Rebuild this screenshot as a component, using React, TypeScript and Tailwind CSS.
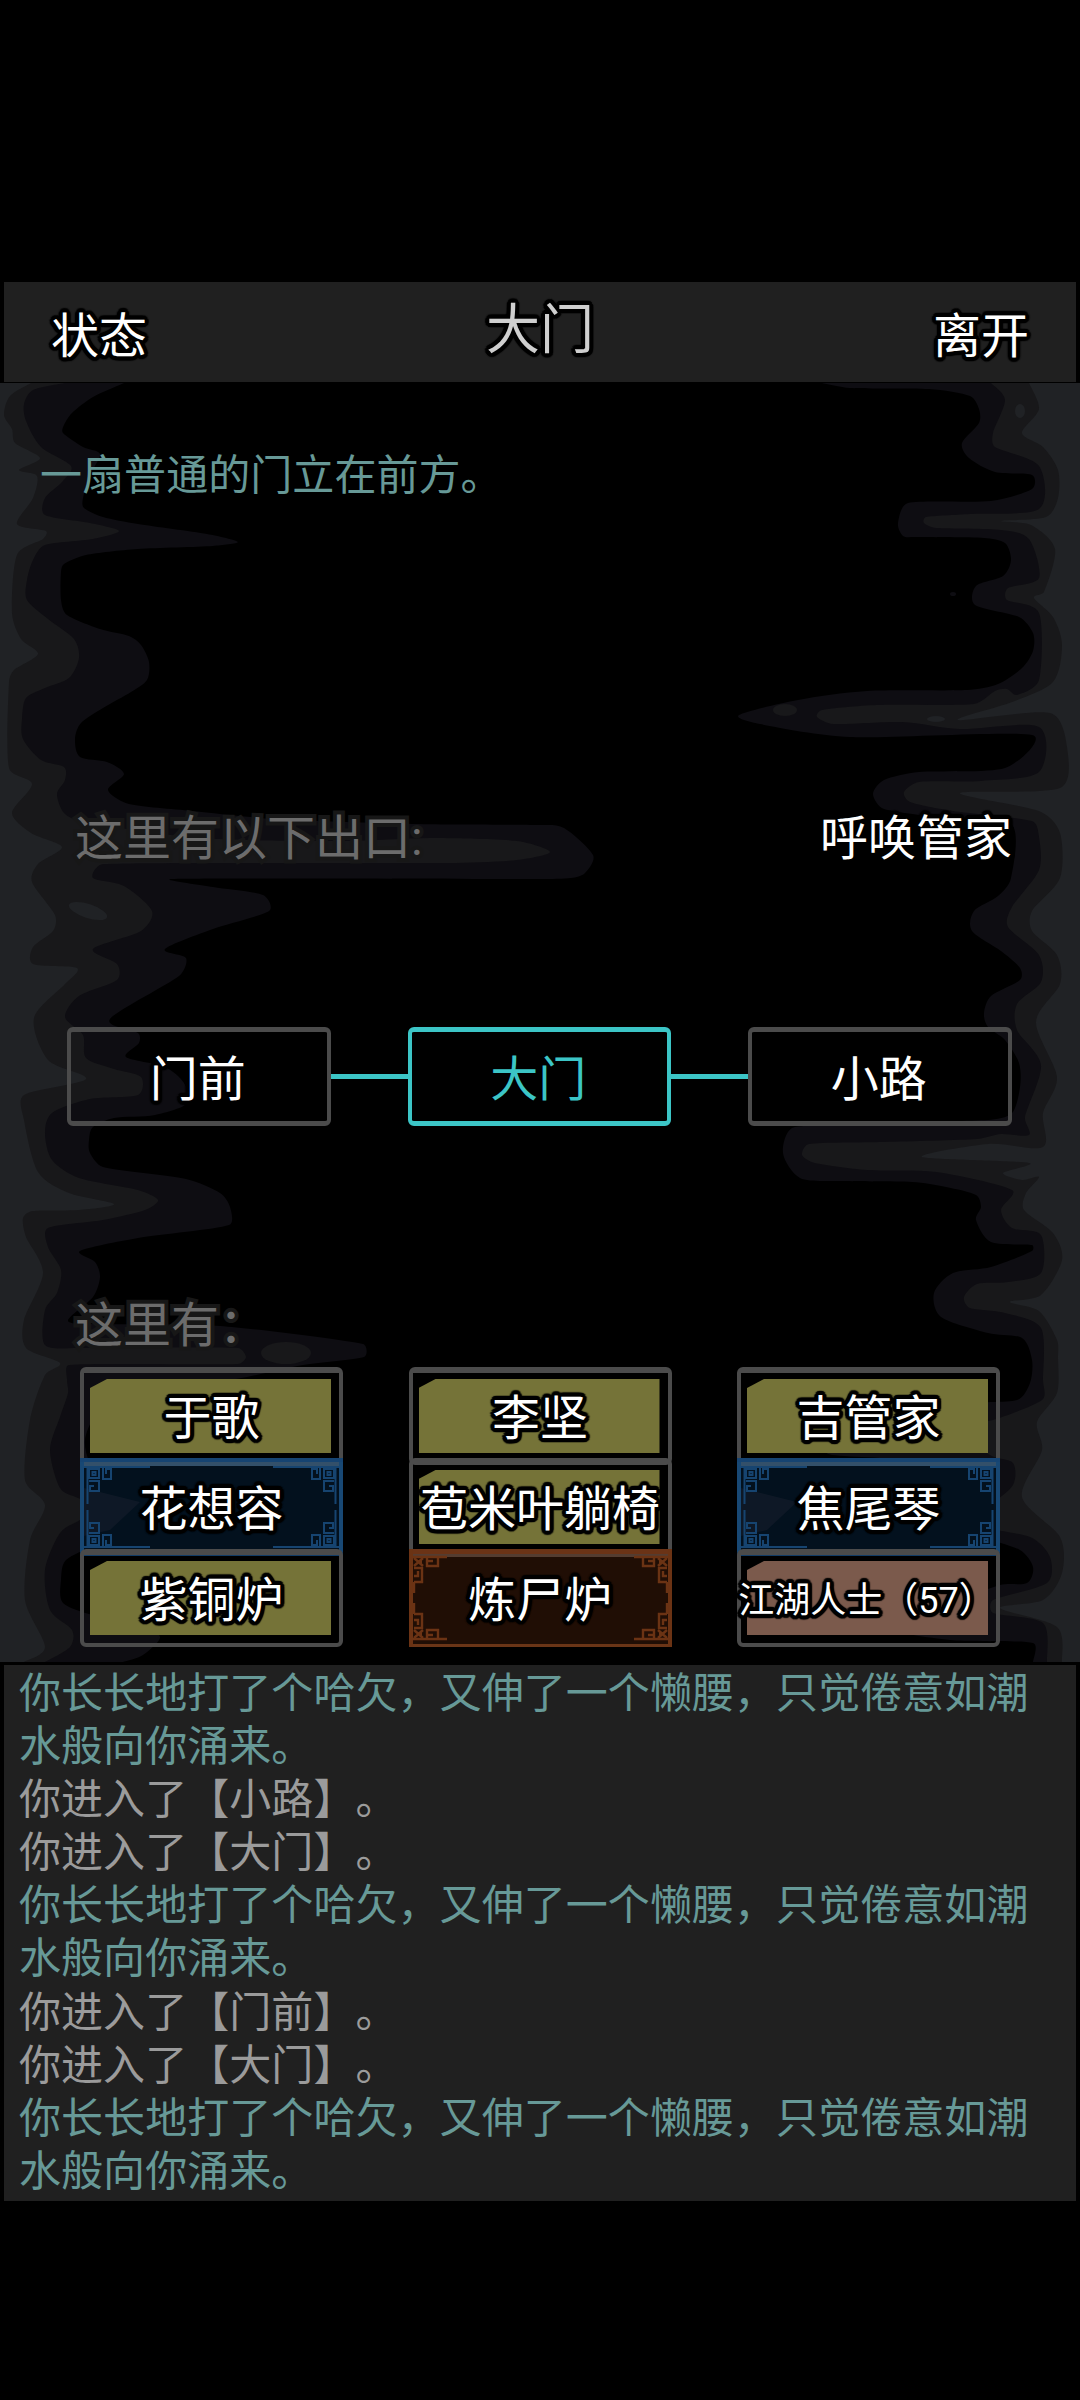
import clsx from "clsx";

type CellKind = "plain" | "crowd" | "rare" | "epic";

interface Cell {
  name: string;
  kind: CellKind;
  small?: boolean;
}

interface LogLine {
  text: string;
  system?: boolean;
}

const YAWN = "你长长地打了个哈欠，又伸了一个懒腰，只觉倦意如潮水般向你涌来。";

// Rounded black glow around labels; text-stroke leaves spiky joins.
const outline =
  "[text-shadow:4px_0_1px_#000,3.7px_1.5px_1px_#000,2.8px_2.8px_1px_#000,1.5px_3.7px_1px_#000,0_4px_1px_#000,-1.5px_3.7px_1px_#000,-2.8px_2.8px_1px_#000,-3.7px_1.5px_1px_#000,-4px_0_1px_#000,-3.7px_-1.5px_1px_#000,-2.8px_-2.8px_1px_#000,-1.5px_-3.7px_1px_#000,0_-4px_1px_#000,1.5px_-3.7px_1px_#000,2.8px_-2.8px_1px_#000,3.7px_-1.5px_1px_#000]";

const exits = ["门前", "大门", "小路"];
const currentRoom = "大门";

const cells: Cell[] = [
  { name: "于歌", kind: "plain" },
  { name: "李坚", kind: "plain" },
  { name: "吉管家", kind: "plain" },
  { name: "花想容", kind: "rare" },
  { name: "苞米叶躺椅", kind: "plain" },
  { name: "焦尾琴", kind: "rare" },
  { name: "紫铜炉", kind: "plain" },
  { name: "炼尸炉", kind: "epic" },
  { name: "江湖人士（57）", kind: "crowd", small: true },
];

const log: LogLine[] = [
  { text: YAWN },
  { text: "你进入了【小路】。", system: true },
  { text: "你进入了【大门】。", system: true },
  { text: YAWN },
  { text: "你进入了【门前】。", system: true },
  { text: "你进入了【大门】。", system: true },
  { text: YAWN },
];

// Ink wash contours, from the faintest layer to the one nearest the edge.
// Each string is a list of x,y points running from top to bottom.
const inkLeft = [
  {
    fill: "#0e0d12",
    points:
      "124,383 93,397 72,413 64,425 63,433 83,447 100,454 90,475 83,498 84,508 103,517 138,524 207,534 238,542 213,546 138,549 86,555 64,564 61,572 61,600 67,615 100,629 129,636 141,645 149,662 147,680 131,692 103,708 81,723 75,739 80,757 107,762 124,774 108,790 129,804 193,811 275,819 413,824 540,825 564,828 593,855 585,873 571,878 540,879 172,879 213,887 263,895 269,911 213,929 165,949 186,958 179,976 110,1019 138,1033 139,1043 126,1057 165,1067 184,1083 188,1103 155,1115 114,1118 93,1127 89,1140 90,1153 103,1167 186,1179 220,1193 230,1207 229,1225 138,1238 80,1251 95,1262 100,1277 93,1297 68,1321 100,1324 220,1326 363,1344 364,1357 303,1365 247,1377 200,1385 110,1402 85,1440 100,1480 145,1505 140,1520 95,1545 66,1560 61,1580 63,1603 93,1615 140,1623 160,1637 143,1655 123,1662",
  },
  {
    fill: "#18181a",
    points:
      "65,383 33,390 24,404 26,421 41,447 71,466 62,482 45,498 45,515 90,523 119,531 93,539 45,545 33,560 27,580 27,600 48,619 74,639 79,658 69,678 45,688 26,698 22,719 23,739 41,760 64,767 65,780 57,794 64,813 83,822 200,838 344,841 430,838 517,841 550,852 517,860 448,863 103,864 93,878 124,886 152,911 141,931 93,949 117,964 117,980 79,996 65,1017 83,1035 86,1058 114,1069 141,1077 138,1095 90,1099 52,1113 45,1133 52,1160 79,1178 138,1190 158,1200 145,1210 103,1220 48,1228 48,1247 61,1270 57,1293 45,1310 45,1345 79,1348 238,1348 246,1357 238,1364 69,1365 67,1380 68,1393 60,1417 50,1450 60,1488 78,1498 100,1508 80,1520 60,1533 45,1570 50,1610 72,1630 70,1647 45,1662",
  },
  {
    fill: "#202225",
    points:
      "31,383 10,396 4,415 12,429 15,443 40,458 19,470 37,476 33,498 17,524 46,531 43,539 17,555 12,613 21,639 38,654 14,670 9,682 9,768 32,784 12,813 31,833 62,847 38,864 32,882 55,915 53,931 33,947 33,964 77,968 65,984 34,1018 48,1060 86,1079 24,1095 24,1120 38,1172 69,1193 114,1204 79,1210 33,1211 23,1218 26,1237 43,1273 24,1320 26,1348 60,1363 45,1375 30,1420 25,1480 45,1505 30,1540 25,1600 45,1647 24,1662",
  },
];

const inkRight = [
  {
    fill: "#0e0d12",
    points:
      "822,383 850,388 929,389 970,396 979,409 979,423 962,443 969,458 995,472 1032,475 1032,489 991,501 908,503 898,523 903,536 915,537 984,538 1005,543 1011,560 1003,576 976,586 975,605 1019,617 1033,633 1033,651 1022,668 998,684 967,690 867,691 798,700 739,715 760,724 850,737 1032,735 1005,768 919,772 884,780 873,794 884,809 953,819 1012,825 1011,878 998,896 974,911 972,931 1001,951 1020,968 1020,980 991,996 984,1013 988,1027 1005,1040 1019,1063 1020,1087 1012,1113 988,1120 795,1127 783,1153 800,1178 836,1181 912,1182 946,1187 976,1195 981,1207 976,1220 991,1242 1032,1245 1032,1251 991,1267 953,1273 934,1293 941,1317 988,1333 1022,1338 1032,1360 1030,1383 1017,1400 960,1405 900,1430 827,1453 900,1460 970,1480 975,1500 965,1523 983,1537 1020,1550 1033,1567 1027,1583 1000,1585 960,1600 890,1627 950,1640 1033,1643 1033,1662",
  },
  {
    fill: "#18181a",
    points:
      "991,383 1005,400 993,433 995,447 1039,466 1039,509 970,514 926,517 924,523 936,528 1001,530 1029,539 1039,578 1008,588 1007,600 1039,613 1039,680 1017,695 1007,689 995,691 974,704 877,705 822,710 817,717 833,724 902,722 960,729 1039,727 1039,772 981,781 919,782 904,792 910,802 953,811 1032,821 1039,837 1039,870 1012,907 1008,927 1039,955 1041,982 1017,1004 1017,1030 1041,1065 1025,1117 1029,1135 1001,1134 977,1139 884,1142 809,1144 802,1155 815,1163 867,1170 936,1172 1012,1190 1001,1210 1012,1228 1041,1235 1041,1273 1008,1282 977,1284 964,1297 970,1308 1005,1313 1041,1328 1043,1380 1042,1400 993,1420 960,1427 990,1455 1013,1463 1013,1485 990,1505 965,1523 1030,1537 1050,1557 1047,1583 993,1600 993,1613 1043,1623 1047,1662",
  },
  {
    fill: "#202225",
    points:
      "1029,383 1039,409 1022,433 1043,447 1058,470 1058,498 1046,517 1001,521 1031,525 1055,549 1044,592 1034,598 1053,617 1062,645 1053,682 1012,702 958,720 1050,713 1067,747 1060,788 960,793 1039,811 1060,833 1060,878 1032,911 1032,931 1057,955 1060,984 1036,1022 1057,1077 1043,1113 1043,1147 988,1144 922,1157 1029,1163 1003,1173 1022,1180 1039,1177 1026,1193 1024,1210 1053,1233 1062,1260 1041,1295 1010,1302 1039,1311 1057,1340 1058,1357 1057,1393 1037,1422 1042,1450 1022,1497 1060,1537 1062,1573 1043,1600 1000,1608 1057,1627 1062,1662",
  },
];

// Catmull-Rom through the contour, closed along the screen edge.
const inkPath = (points: string, edge: number) => {
  const p = points.split(" ").map((pair) => pair.split(",").map(Number));
  let d = `M${edge},${p[0][1]} L${p[0][0]},${p[0][1]}`;
  for (let i = 0; i < p.length - 1; i++) {
    const a = p[Math.max(i - 1, 0)];
    const b = p[i];
    const c = p[i + 1];
    const e = p[Math.min(i + 2, p.length - 1)];
    const len = Math.hypot(c[0] - b[0], c[1] - b[1]);
    const t1 = Math.min(1 / 7, len / 3 / (Math.hypot(c[0] - a[0], c[1] - a[1]) || 1));
    const t2 = Math.min(1 / 7, len / 3 / (Math.hypot(e[0] - b[0], e[1] - b[1]) || 1));
    d += ` C${b[0] + (c[0] - a[0]) * t1},${b[1] + (c[1] - a[1]) * t1}`;
    d += ` ${c[0] - (e[0] - b[0]) * t2},${c[1] - (e[1] - b[1]) * t2} ${c[0]},${c[1]}`;
  }
  return `${d} L${edge},${p[p.length - 1][1]} Z`;
};

const InkBackground = () => (
  <svg
    className="absolute inset-x-0 top-0 h-[1280px] w-[1080px]"
    viewBox="0 382 1080 1280"
    aria-hidden="true"
  >
    {inkLeft.map((layer) => (
      <path key={layer.fill} d={inkPath(layer.points, 0)} fill={layer.fill} />
    ))}
    {inkRight.map((layer) => (
      <path key={layer.fill} d={inkPath(layer.points, 1080)} fill={layer.fill} />
    ))}
    <ellipse cx="286" cy="1353" rx="25" ry="11" fill="#18181a" />
    <ellipse cx="88" cy="911" rx="20" ry="7" fill="#202225" transform="rotate(18 88 911)" />
    <ellipse cx="785" cy="710" rx="12" ry="6" fill="#18181a" />
    <ellipse cx="936" cy="719" rx="9" ry="3" fill="#202225" />
    <ellipse cx="1020" cy="411" rx="5" ry="7" fill="#202225" />
    <ellipse cx="953" cy="594" rx="3" ry="2" fill="#0e0d12" />
  </svg>
);

const corners = [
  "",
  "translate(263 0) scale(-1 1)",
  "translate(0 98) scale(1 -1)",
  "translate(263 98) scale(-1 -1)",
];

const RareFrame = () => (
  <svg className="absolute inset-0 h-[98px] w-[263px]" viewBox="0 0 263 98" aria-hidden="true">
    <rect width="263" height="98" fill="#03111e" />
    <path d="M4 30L60 44L30 72L4 78Z" fill="#0e1826" />
    <rect y="0" width="263" height="4" fill="#164472" />
    <rect y="4" width="263" height="4" fill="#33506a" />
    <rect y="94" width="263" height="4" fill="#123c66" />
    <path d="M2 4V94M261 4V94" stroke="#184874" strokeWidth="4" />
    {corners.map((transform) => (
      <g key={transform} transform={transform} fill="none" stroke="#164470" strokeWidth="2">
        <path d="M4 9H70M7.5 9V46" />
        <path d="M9 11H19V20H9ZM12.5 14H15.5V17H12.5Z" />
        <path d="M23 10V21H31V11H26V16" />
        <path d="M9 23H19V33H10V28H14" />
      </g>
    ))}
  </svg>
);

const EpicFrame = () => (
  <svg className="absolute inset-0 h-[98px] w-[263px]" viewBox="0 0 263 98" aria-hidden="true">
    <rect width="263" height="98" fill="#200e05" />
    <rect y="0" width="263" height="5" fill="#6b3316" />
    <rect y="5" width="263" height="3" fill="#543c30" />
    <rect y="95" width="263" height="3" fill="#6a3517" />
    <path d="M2 0V98M261 0V98" stroke="#6b3314" strokeWidth="4" />
    {corners.map((transform) => (
      <g key={transform} transform={transform} fill="none" stroke="#6b3314" strokeWidth="2.4">
        <path d="M4 8H38" />
        <path d="M5 9L14 17M14 9L5 17M9 13H13" />
        <path d="M18 9V17H29V9M18 12H24" />
        <path d="M5 19H13V33H5M5 27H9V22M5 33V44" />
      </g>
    ))}
  </svg>
);

const RoomCell = ({ name, kind, small }: Cell) => {
  const framed = kind === "plain" || kind === "crowd";

  return (
    <button
      type="button"
      className={clsx(
        "relative flex h-[98px] w-[263px] items-center justify-center whitespace-nowrap",
        framed && "rounded-md border-4 border-t-6 border-[#4b4b4b]",
      )}
    >
      {kind === "rare" && <RareFrame />}
      {kind === "epic" && <EpicFrame />}
      {framed && (
        <span
          className={clsx(
            "absolute top-1.5 left-1.5 h-[74px] w-[241px] [clip-path:polygon(17px_0,100%_0,100%_100%,0_100%,0_9px)]",
            kind === "plain" ? "bg-[#757338]" : "bg-[#7b5a4c]",
          )}
        />
      )}
      <span
        className={clsx(
          "relative text-white",
          outline,
          framed ? "pt-1" : "pt-1.5",
          small ? "pr-1 text-[36px]" : "text-[48px]",
        )}
      >
        {name}
      </span>
    </button>
  );
};

const ExitMap = () => (
  <div className="mt-[158px] flex items-center pl-[67px]">
    {exits.map((exit, index) => (
      <div key={exit} className="flex items-center">
        {index > 0 && <div className="h-[5px] w-[77px] bg-[#3cc5c6]" />}
        <button
          type="button"
          className={clsx(
            "flex h-[99px] w-[263.5px] items-center justify-center rounded-md border-4 border-y-[5px] pt-1.5 pr-0.5 text-[48px]",
            exit === currentRoom
              ? "border-[#3cc5c6] text-[#3cc5c6]"
              : clsx("border-[#4b4b4b] text-white", outline),
          )}
        >
          {exit}
        </button>
      </div>
    ))}
  </div>
);

const App = () => (
  <div className="min-h-[2400px] w-[1080px] bg-black pt-[282px] font-['Roboto','Noto_Sans_CJK_SC',sans-serif] [text-spacing-trim:space-all]">
    <header className="mx-1 grid h-[100px] grid-cols-3 items-center bg-[#202020] px-[47px] text-[48px] text-white">
      <button type="button" className={clsx("mt-2.5 justify-self-start", outline)}>
        状态
      </button>
      <h1
        className={clsx(
          "-mt-0.5 justify-self-center text-[54px] leading-none text-[#cfcfcf]",
          outline,
        )}
      >
        大门
      </h1>
      <button type="button" className={clsx("mt-2.5 justify-self-end", outline)}>
        离开
      </button>
    </header>

    <main className="relative h-[1283px]">
      <InkBackground />
      <div className="relative pt-16">
        <p className="pl-10 text-[42px] leading-[60px] tracking-[0.06px] text-[#679997]">
          一扇普通的门立在前方。
        </p>

        <div className="mt-[303px] flex items-center justify-between pr-[68px] pl-[75px] text-[48px] leading-[60px]">
          <h2 className="text-[#6c6c6c] [-webkit-text-stroke:8px_#171717] [paint-order:stroke_fill]">
            这里有以下出口:
          </h2>
          <button type="button" className={clsx("text-white", outline)}>
            呼唤管家
          </button>
        </div>

        <ExitMap />

        <h2 className="mt-[170px] pl-[75px] text-[48px] leading-[60px] text-[#6c6c6c] [-webkit-text-stroke:8px_#171717] [paint-order:stroke_fill]">
          这里有：
        </h2>
        <div className="mt-[11px] grid auto-rows-[91px] grid-cols-[repeat(3,328.5px)] pl-20">
          {cells.map((cell) => (
            <RoomCell key={cell.name} {...cell} />
          ))}
        </div>
      </div>
    </main>

    <section className="mx-1 h-[536px] bg-[#202020] pt-0.5 pl-[15px] text-[42px] leading-[53.1px] tracking-[0.06px]">
      {log.map((line, index) => (
        <p
          key={index}
          className={clsx("w-[1012px] break-all", line.system ? "text-[#9b9b9b]" : "text-[#679997]")}
        >
          {line.text}
        </p>
      ))}
    </section>
  </div>
);

export default App;
